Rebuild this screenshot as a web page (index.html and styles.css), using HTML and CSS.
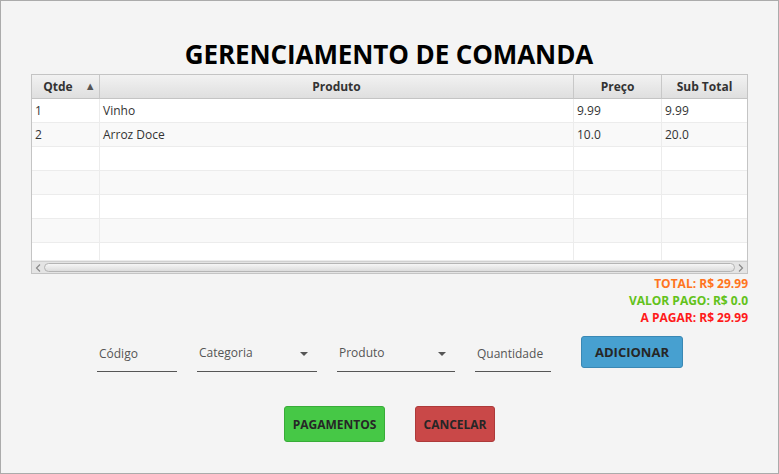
FILE: index.html
```html
<!DOCTYPE html>
<html>
<head>
<meta charset="utf-8">
<link rel="stylesheet" href="styles.css">
</head>
<body>
<div class="window">
  <h1 class="title">GERENCIAMENTO DE COMANDA</h1>
  <div class="table">
    <div class="row head">
      <div class="cell c1 hc q">Qtde <span class="sort">▲</span></div>
      <div class="cell c2 hc">Produto</div>
      <div class="cell c3 hc">Preço</div>
      <div class="cell c4 hc">Sub Total</div>
    </div>
    <div class="row odd"><div class="cell c1">1</div><div class="cell c2">Vinho</div><div class="cell c3">9.99</div><div class="cell c4">9.99</div></div>
    <div class="row even"><div class="cell c1">2</div><div class="cell c2">Arroz Doce</div><div class="cell c3">10.0</div><div class="cell c4">20.0</div></div>
    <div class="row odd"><div class="cell c1"></div><div class="cell c2"></div><div class="cell c3"></div><div class="cell c4"></div></div>
    <div class="row even"><div class="cell c1"></div><div class="cell c2"></div><div class="cell c3"></div><div class="cell c4"></div></div>
    <div class="row odd"><div class="cell c1"></div><div class="cell c2"></div><div class="cell c3"></div><div class="cell c4"></div></div>
    <div class="row even"><div class="cell c1"></div><div class="cell c2"></div><div class="cell c3"></div><div class="cell c4"></div></div>
    <div class="row odd short"><div class="cell c1"></div><div class="cell c2"></div><div class="cell c3"></div><div class="cell c4"></div></div>
    <div class="scrollbar">
      <span class="arrow">
        <svg width="6" height="8" viewBox="0 0 6 8"><path d="M5 0.5 L1.5 4 L5 7.5" fill="none" stroke="#8a8a8a" stroke-width="1.2"/></svg>
      </span>
      <div class="thumb"></div>
      <span class="arrow">
        <svg width="6" height="8" viewBox="0 0 6 8"><path d="M1 0.5 L4.5 4 L1 7.5" fill="none" stroke="#8a8a8a" stroke-width="1.2"/></svg>
      </span>
    </div>
  </div>
  <div class="totals">
    <div class="total">TOTAL: R$ 29.99</div>
    <div class="pago">VALOR PAGO: R$ 0.0</div>
    <div class="apagar">A PAGAR: R$ 29.99</div>
  </div>
  <div class="form">
    <div class="field f-cod"><span class="label">Código</span></div>
    <div class="field f-cat"><span class="label">Categoria</span><span class="caret"></span></div>
    <div class="field f-prod"><span class="label">Produto</span><span class="caret"></span></div>
    <div class="field f-qtd"><span class="label">Quantidade</span></div>
    <button class="btn btn-add">ADICIONAR</button>
  </div>
  <div class="actions">
    <button class="btn btn-pay">PAGAMENTOS</button>
    <button class="btn btn-cancel">CANCELAR</button>
  </div>
</div>
</body>
</html>
```
FILE: styles.css
```css
* { box-sizing: border-box; }
html, body { margin: 0; padding: 0; }
body { font-family: "Open Sans", "Liberation Sans", sans-serif; }
.window {
  width: 779px;
  height: 474px;
  border: 1px solid #ababab;
  background: #f4f4f4;
  padding: 0 31px 0 30px;
  display: flex;
  flex-direction: column;
}
.title {
  margin: 33px 0 0 0;
  height: 40px;
  font-size: 26px;
  line-height: 40px;
  font-weight: 700;
  text-align: center;
  color: #000;
  letter-spacing: -0.1px;
}
.table {
  width: 717px;
  height: 200px;
  border: 1px solid #c4c4c4;
  background: #fff;
  display: flex;
  flex-direction: column;
  overflow: hidden;
}
.row {
  display: flex;
  height: 24px;
  flex: none;
}
.row.short { height: 18px; }
.row.even { background: #f9f9f9; }
.row.odd { background: #ffffff; }
.cell {
  height: 100%;
  border-right: 1px solid #ececec;
  border-bottom: 1px solid #ececec;
  font-size: 12px;
  color: #333;
  line-height: 23px;
  padding-left: 3px;
  white-space: nowrap;
}
.c1 { width: 68px; }
.c2 { width: 474px; }
.c3 { width: 88px; }
.c4 { width: 85px; border-right: none; }
.head {
  height: 24px;
  background: linear-gradient(#f2f2f2, #dedede);
}
.hc {
  border-right: 1px solid #c8c8c8;
  border-bottom: 1px solid #c4c4c4;
  font-weight: 700;
  text-align: center;
  padding-left: 0;
  color: #333;
}
.hc.q { padding-left: 8px; }
.head .c4 { border-right: none; }
.sort { font-size: 11px; color: #555; margin-left: 9px; position: relative; top: -1px; }
.scrollbar {
  height: 12px;
  flex: none;
  display: flex;
  align-items: center;
  background: #e4e4e4;
  border-top: 1px solid #d0d0d0;
  padding: 0 2px;
}
.arrow { width: 8px; height: 10px; display: flex; align-items: center; justify-content: center; }
.thumb {
  flex: 1;
  height: 9px;
  margin: 0 2px;
  border: 1px solid #b4b4b4;
  border-radius: 5px;
  background: linear-gradient(#f6f6f6, #dcdcdc);
}
.totals {
  margin-top: 1px;
  width: 717px;
  text-align: right;
  font-size: 12px;
  font-weight: 700;
  line-height: 17px;
}
.total { color: #ff7420; }
.pago { color: #62c21a; }
.apagar { color: #ff1a1a; }
.form {
  margin-top: 10px;
  padding-left: 66px;
  display: flex;
  align-items: flex-start;
  height: 36px;
}
.field {
  height: 36px;
  border-bottom: 1px solid #555;
  margin-right: 20px;
  display: flex;
  align-items: center;
  justify-content: space-between;
  font-size: 12px;
  color: #555;
  padding: 0 6px 0 2px;
}
.f-cat .label, .f-prod .label { position: relative; top: -1px; }
.f-cod { width: 80px; }
.f-cat { width: 120px; }
.f-prod { width: 118px; }
.f-qtd { width: 76px; margin-right: 30px; }
.caret {
  width: 0; height: 0;
  border-left: 4px solid transparent;
  border-right: 4px solid transparent;
  border-top: 4px solid #555;
  margin-right: 3px;
}
.btn {
  font-family: "Open Sans", "Liberation Sans", sans-serif;
  font-weight: 700;
  color: #262626;
  border-radius: 3px;
  padding: 0;
  cursor: pointer;
}
.btn-add {
  width: 102px;
  height: 32px;
  font-size: 13px;
  background: #47a0d0;
  border: 1px solid #3a88b4;
}
.actions {
  margin-top: 34px;
  display: flex;
  justify-content: center;
  gap: 30px;
  padding-left: 1px;
}
.btn-pay {
  width: 101px;
  height: 36px;
  font-size: 12px;
  background: #46c846;
  border: 1px solid #38ac38;
}
.btn-cancel {
  width: 80px;
  height: 36px;
  font-size: 12px;
  background: #c94848;
  border: 1px solid #ad3a3a;
}
```
